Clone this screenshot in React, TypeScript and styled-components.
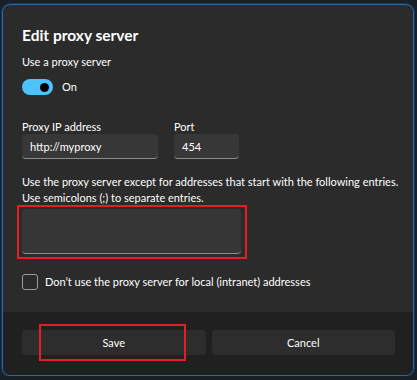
import { FunctionComponent } from 'react';
import styled, { createGlobalStyle } from 'styled-components';

const GlobalStyle = createGlobalStyle`
    html, body {
        margin: 0;
        padding: 0;
        background: #1a1e25;
        font-family: 'Segoe UI', Lato, 'Liberation Sans', sans-serif;
        color: #ffffff;
    }
    * {
        box-sizing: border-box;
    }
`;

const Dialog = styled('div')`
    margin: 4px 0 0 2px;
    width: 412px;
    height: 372px;
    display: flex;
    flex-direction: column;
    border: 1px solid #2569a8;
    box-shadow: 0 0 0 1px #12385c;
    border-radius: 8px;
    overflow: hidden;
    background: #2b2b2b;
`;

const Body = styled('div')`
    flex: 1;
    min-height: 0;
    padding: 19px 19px 0 19px;
    display: flex;
    flex-direction: column;
`;

const Title = styled('h2')`
    margin: 0;
    font-size: 15.5px;
    font-weight: 700;
    line-height: 22px;
`;

const Label = styled('div')<{ $gap?: number }>`
    margin-top: ${(p) => p.$gap ?? 0}px;
    font-size: 11px;
    line-height: 14px;
    color: #ffffff;
`;

const ToggleRow = styled('div')`
    display: flex;
    align-items: center;
    gap: 9px;
    margin-top: 10px;
    font-size: 11px;
    line-height: 16px;
`;

const Toggle = styled('div')<{ $on: boolean }>`
    width: 31px;
    height: 16px;
    border-radius: 8px;
    background: ${(p) => (p.$on ? '#4cc2ff' : 'transparent')};
    display: flex;
    align-items: center;
    justify-content: ${(p) => (p.$on ? 'flex-end' : 'flex-start')};
    padding: 0 4px;

    &::after {
        content: '';
        width: 9px;
        height: 9px;
        border-radius: 50%;
        background: #000000;
    }
`;

const Fields = styled('div')`
    display: flex;
    gap: 16px;
    margin-top: 25px;
`;

const Field = styled('div')<{ $width: number }>`
    width: ${(p) => p.$width}px;
    display: flex;
    flex-direction: column;
`;

const Input = styled('div')`
    height: 25px;
    background: #373737;
    border-radius: 4px;
    border-bottom: 1px solid #8c8c8c;
    padding: 0 8px;
    display: flex;
    align-items: center;
    font-size: 11px;
    color: #ffffff;
`;

const Help = styled('p')`
    margin: 15px 0 0 0;
    font-size: 11px;
    line-height: 15.5px;
    color: #ffffff;
    white-space: nowrap;
`;

const Highlighted = styled('div')`
    position: relative;
    margin-top: 4px;
    width: 219px;
`;

const Marker = styled('div')<{ $inset: string }>`
    position: absolute;
    inset: ${(p) => p.$inset};
    border: 2px solid #e81c24;
    pointer-events: none;
`;

const TextArea = styled('div')`
    height: 45px;
    background: #363636;
    border-radius: 4px;
    border-bottom: 1px solid #8c8c8c;
`;

const CheckRow = styled('label')`
    display: flex;
    align-items: center;
    gap: 7px;
    margin-top: 20px;
    font-size: 11px;
    line-height: 16px;
    color: #ffffff;
`;

const Box = styled('span')`
    width: 16px;
    height: 16px;
    border: 1px solid #9a9a9a;
    border-radius: 3px;
    background: #2a2a2a;
`;

const Footer = styled('div')`
    flex-shrink: 0;
    height: 63px;
    background: #202020;
    padding: 18px 18px 0 19px;
    display: flex;
    align-items: flex-start;
    gap: 6px;
`;

const ButtonWrap = styled('div')`
    position: relative;
    flex: 1;
`;

const Button = styled('button')`
    display: block;
    width: 100%;
    height: 25px;
    border: none;
    border-radius: 4px;
    background: #2d2d2d;
    color: #ffffff;
    font-family: inherit;
    font-size: 11px;
`;

const App: FunctionComponent = () => {
    return (
        <>
            <GlobalStyle />
            <Dialog>
                <Body>
                    <Title>Edit proxy server</Title>
                    <Label $gap={9}>Use a proxy server</Label>
                    <ToggleRow>
                        <Toggle $on />
                        <span>On</span>
                    </ToggleRow>
                    <Fields>
                        <Field $width={136}>
                            <Label>Proxy IP address</Label>
                            <Input>http://myproxy</Input>
                        </Field>
                        <Field $width={65}>
                            <Label>Port</Label>
                            <Input>454</Input>
                        </Field>
                    </Fields>
                    <Help>
                        Use the proxy server except for addresses that start with the following entries.
                        <br />
                        Use semicolons (;) to separate entries.
                    </Help>
                    <Highlighted>
                        <TextArea />
                        <Marker $inset="-4px -6px -5px -5px" />
                    </Highlighted>
                    <CheckRow>
                        <Box />
                        Don’t use the proxy server for local (intranet) addresses
                    </CheckRow>
                </Body>
                <Footer>
                    <ButtonWrap>
                        <Button>Save</Button>
                        <Marker $inset="-6px 20px -6px 17px" />
                    </ButtonWrap>
                    <ButtonWrap>
                        <Button>Cancel</Button>
                    </ButtonWrap>
                </Footer>
            </Dialog>
        </>
    );
};

export default App;
